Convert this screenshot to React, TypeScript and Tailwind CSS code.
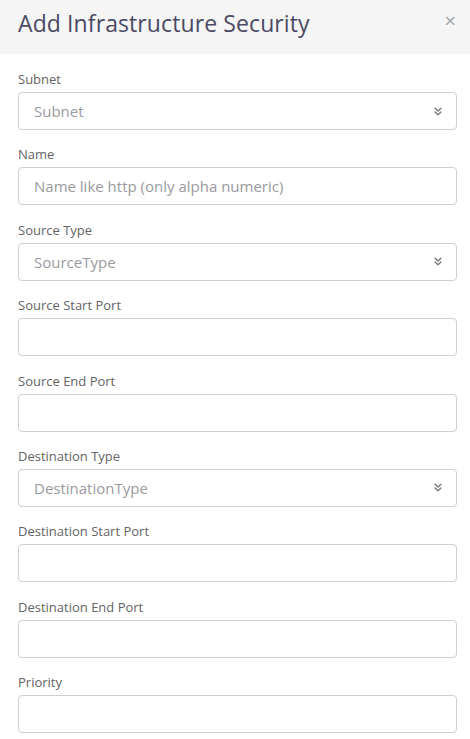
import React from 'react';

const font = { fontFamily: '"Open Sans", "Liberation Sans", sans-serif' };

const Chevrons = () => (
  <svg width="10" height="11" viewBox="0 0 12 12" fill="none" stroke="#7a7a7e" strokeWidth="1.7" strokeLinecap="round" strokeLinejoin="round">
    <path d="M2.5 2 L6 5.5 L9.5 2" />
    <path d="M2.5 6.5 L6 10 L9.5 6.5" />
  </svg>
);

const Field = ({ label, placeholder, select }: { label: string; placeholder?: string; select?: boolean }) => (
  <div className="mb-[15.4px]">
    <label className="block text-[13px] leading-[18px] text-[#646466] mb-1">{label}</label>
    <div className="h-[38px] border border-[#cfcfd4] rounded-[4px] flex items-center justify-between pl-[15px] pr-[13px] bg-white">
      <span className="text-[15px] text-[#9a9a9e]">{placeholder}</span>
      {select && <Chevrons />}
    </div>
  </div>
);

const App = () => {
  return (
    <div className="w-[470px] h-[739px] bg-white overflow-hidden" style={font}>
      <div className="h-[54px] bg-[#f5f5f5] flex items-center justify-between pl-[18px] pr-[14px]">
        <h1 className="text-[23px] tracking-[0.1px] text-[#4b4a63] leading-none mb-[8px]">Add Infrastructure Security</h1>
        <button className="text-[#a0a0a8] text-[20px] leading-none mb-[12px]">×</button>
      </div>
      <div className="pl-[18px] pr-[13px] pt-4">
        <Field label="Subnet" placeholder="Subnet" select />
        <Field label="Name" placeholder="Name like http (only alpha numeric)" />
        <Field label="Source Type" placeholder="SourceType" select />
        <Field label="Source Start Port" />
        <Field label="Source End Port" />
        <Field label="Destination Type" placeholder="DestinationType" select />
        <Field label="Destination Start Port" />
        <Field label="Destination End Port" />
        <Field label="Priority" />
      </div>
    </div>
  )
}

export default App
